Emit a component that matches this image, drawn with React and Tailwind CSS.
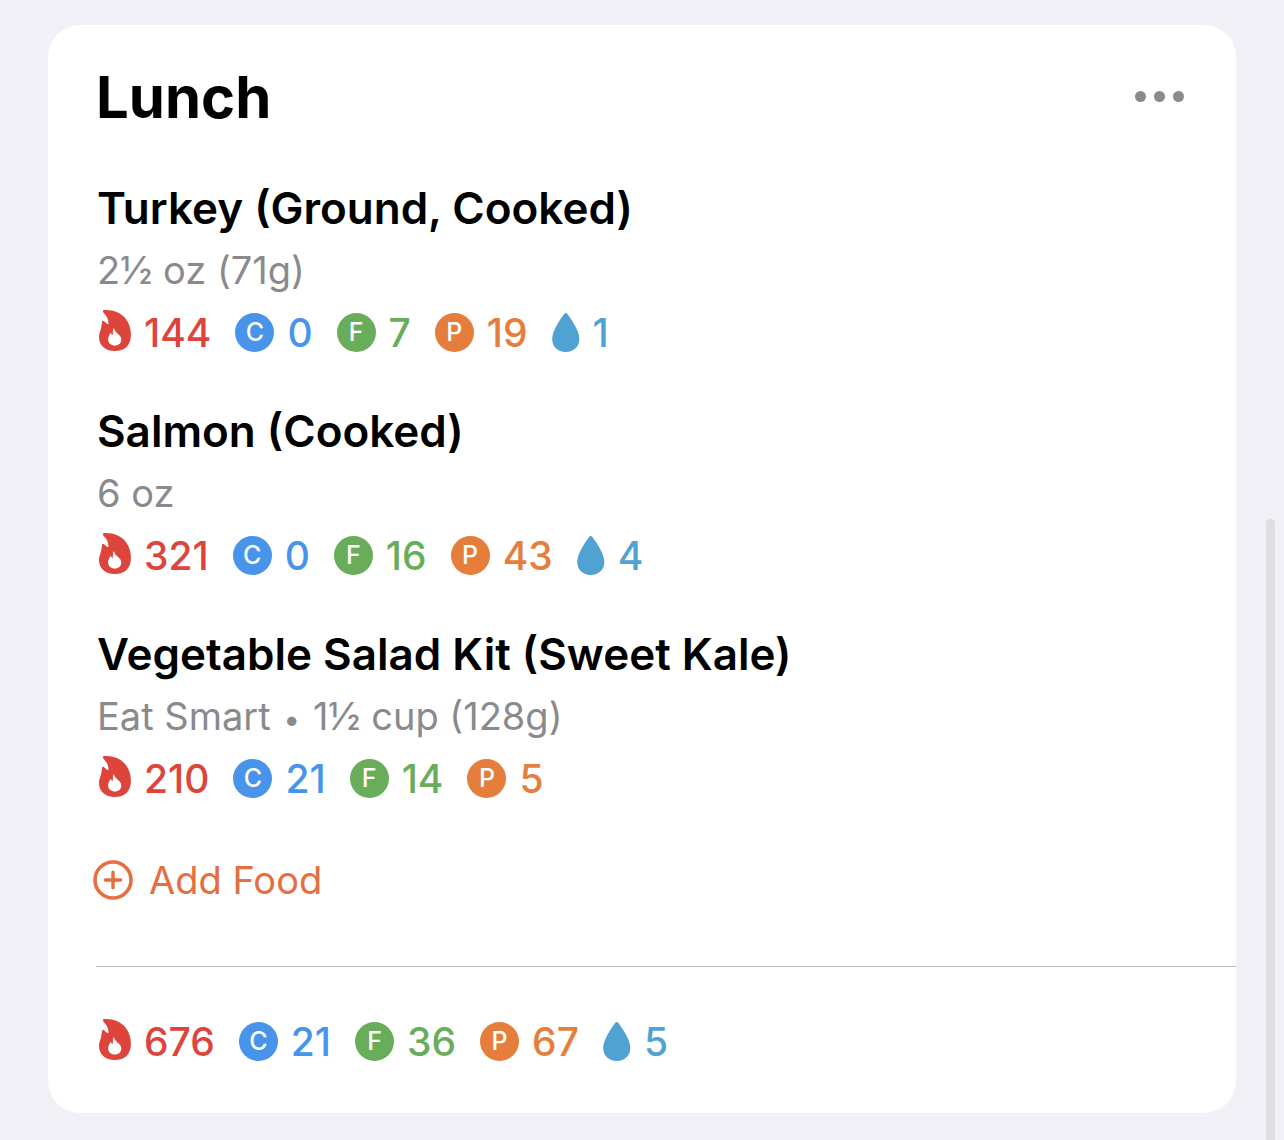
import React from "react";

const foods = [
  {
    name: "Turkey (Ground, Cooked)",
    detail: ["2½ oz (71g)"],
    facts: { calories: 144, carbs: 0, fat: 7, protein: 19, water: 1 },
  },
  {
    name: "Salmon (Cooked)",
    detail: ["6 oz"],
    facts: { calories: 321, carbs: 0, fat: 16, protein: 43, water: 4 },
  },
  {
    name: "Vegetable Salad Kit (Sweet Kale)",
    detail: ["Eat Smart", "1½ cup (128g)"],
    facts: { calories: 210, carbs: 21, fat: 14, protein: 5 },
  },
];

const totals = { calories: 676, carbs: 21, fat: 36, protein: 67, water: 5 };

function Flame() {
  return (
    <svg viewBox="0 0 32 41" className="mb-1.5 h-[41px] w-8" aria-hidden="true">
      <path
        fill="currentColor"
        fillRule="evenodd"
        d="M5.2 0.1C14 -0.4 22 2.800 26.500 8.500C30.500 13.500 32 19.500 31.900 25C31.800 35.500 25.500 41 16 41C6 41 0 35.200 0 27C0 23.500 1.200 21.200 2 18.500C2.700 16.200 2.500 14 3 12C3.300 10.600 4.300 10.500 5.200 11.300C6.300 12.500 7.800 13.800 9.300 14.300C9.900 9.800 8 6.300 4.700 3C3.300 1.500 3.900 0.200 5.200 0.100ZM15.200 18.800C15.800 23.200 22.300 24.500 22.300 29.600C22.300 33.400 19.700 35.600 15.900 35.600C11.900 35.600 9.100 33.100 9.100 29.300C9.100 27 10.400 25.500 11 23.800C11.200 23.100 12 23 12.300 23.700C12.600 24.400 13 24.900 13.500 25.200C14.100 23.200 13.900 21.300 14 19.200C14.100 18.400 14.900 18.200 15.200 18.800Z"
      />
    </svg>
  );
}

function Drop() {
  return (
    <svg viewBox="0 0 28 39" className="mb-0.5 h-[39px] w-7" aria-hidden="true">
      <path
        fill="currentColor"
        d="M11.900 1.200C13 -0.300 14.500 -0.300 15.600 1.200C20.500 8 27.300 18 27.300 25.800C27.300 33.700 21.800 39 13.700 39C5.600 39 0.200 33.700 0.200 25.800C0.200 18 7 8 11.900 1.200Z"
      />
    </svg>
  );
}

function Disc({ color, children }) {
  return (
    <span
      aria-hidden="true"
      className={`${color} mb-0.5 flex size-[39px] items-center justify-center rounded-full text-[25px] leading-none font-medium text-white`}
    >
      {children}
    </span>
  );
}

const kinds = [
  { key: "calories", label: "Calories", text: "text-[#dc443c]", icon: <Flame /> },
  { key: "carbs", label: "Carbs", text: "text-[#4894eb]", icon: <Disc color="bg-[#4894eb]">C</Disc> },
  { key: "fat", label: "Fat", text: "text-[#69ad5b]", icon: <Disc color="bg-[#69ad5b]">F</Disc> },
  { key: "protein", label: "Protein", text: "text-[#e57e3d]", icon: <Disc color="bg-[#e57e3d]">P</Disc> },
  { key: "water", label: "Water", text: "text-[#4fa2d2]", icon: <Drop /> },
];

function Facts({ facts }) {
  return (
    <ul className="flex flex-wrap gap-x-6 pt-0.5 pl-0.5 text-[39px] leading-[60px] font-medium">
      {kinds
        .filter(({ key }) => facts[key] !== undefined)
        .map(({ key, label, text, icon }) => (
          <li key={key} aria-label={label} className={`${text} flex items-center gap-[13px]`}>
            {icon}
            <span>{facts[key]}</span>
          </li>
        ))}
    </ul>
  );
}

function Detail({ parts }) {
  return (
    <p className="text-[38px] leading-[62px] text-[#8a8a8d]">
      {parts.map((part, i) => (
        <React.Fragment key={part}>
          {i > 0 && (
            <>
              {" "}
              <span className="mx-0.5 text-[30px] leading-none">•</span>{" "}
            </>
          )}
          {part}
        </React.Fragment>
      ))}
    </p>
  );
}

export default function App() {
  return (
    <div className="relative min-h-screen bg-[#f1f0f6] px-12 pt-[25px] pb-[27px] font-['Inter',sans-serif]">
      <main className="rounded-[32px] bg-white pt-9 pl-12">
        <header className="flex items-center justify-between pr-[52px]">
          <h1 className="text-[58px] leading-[72px] font-bold text-black">Lunch</h1>
          <button type="button" aria-label="More options" className="mb-0.5 flex gap-2 text-[#8a8a8d]">
            <span className="size-[11px] rounded-full bg-current" />
            <span className="size-[11px] rounded-full bg-current" />
            <span className="size-[11px] rounded-full bg-current" />
          </button>
        </header>

        <ul className="mt-11 flex flex-col gap-[37px] pl-px">
          {foods.map((food) => (
            <li key={food.name}>
              <h2 className="text-[44px] leading-[62px] font-semibold text-black">{food.name}</h2>
              <Detail parts={food.detail} />
              <Facts facts={food.facts} />
            </li>
          ))}
        </ul>

        <button
          type="button"
          className="mt-10 -ml-[3px] flex items-center gap-4 text-[38px] leading-[62px] text-[#e66e40]"
        >
          <svg viewBox="0 0 40 40" className="size-10" fill="none" stroke="currentColor" aria-hidden="true">
            <circle cx="20" cy="20" r="18" strokeWidth="3.6" />
            <path d="M20 12.300v15.400M12.300 20h15.400" strokeWidth="3.4" strokeLinecap="round" />
          </svg>
          Add Food
        </button>

        <footer className="mt-[55px] border-t border-[#b9b9bb] pt-[43px] pb-[41px] pl-px">
          <Facts facts={totals} />
        </footer>
      </main>
      <div className="absolute top-[519px] right-[9px] bottom-0 w-[9px] rounded-t-full bg-[#dfdee3]" />
    </div>
  );
}
